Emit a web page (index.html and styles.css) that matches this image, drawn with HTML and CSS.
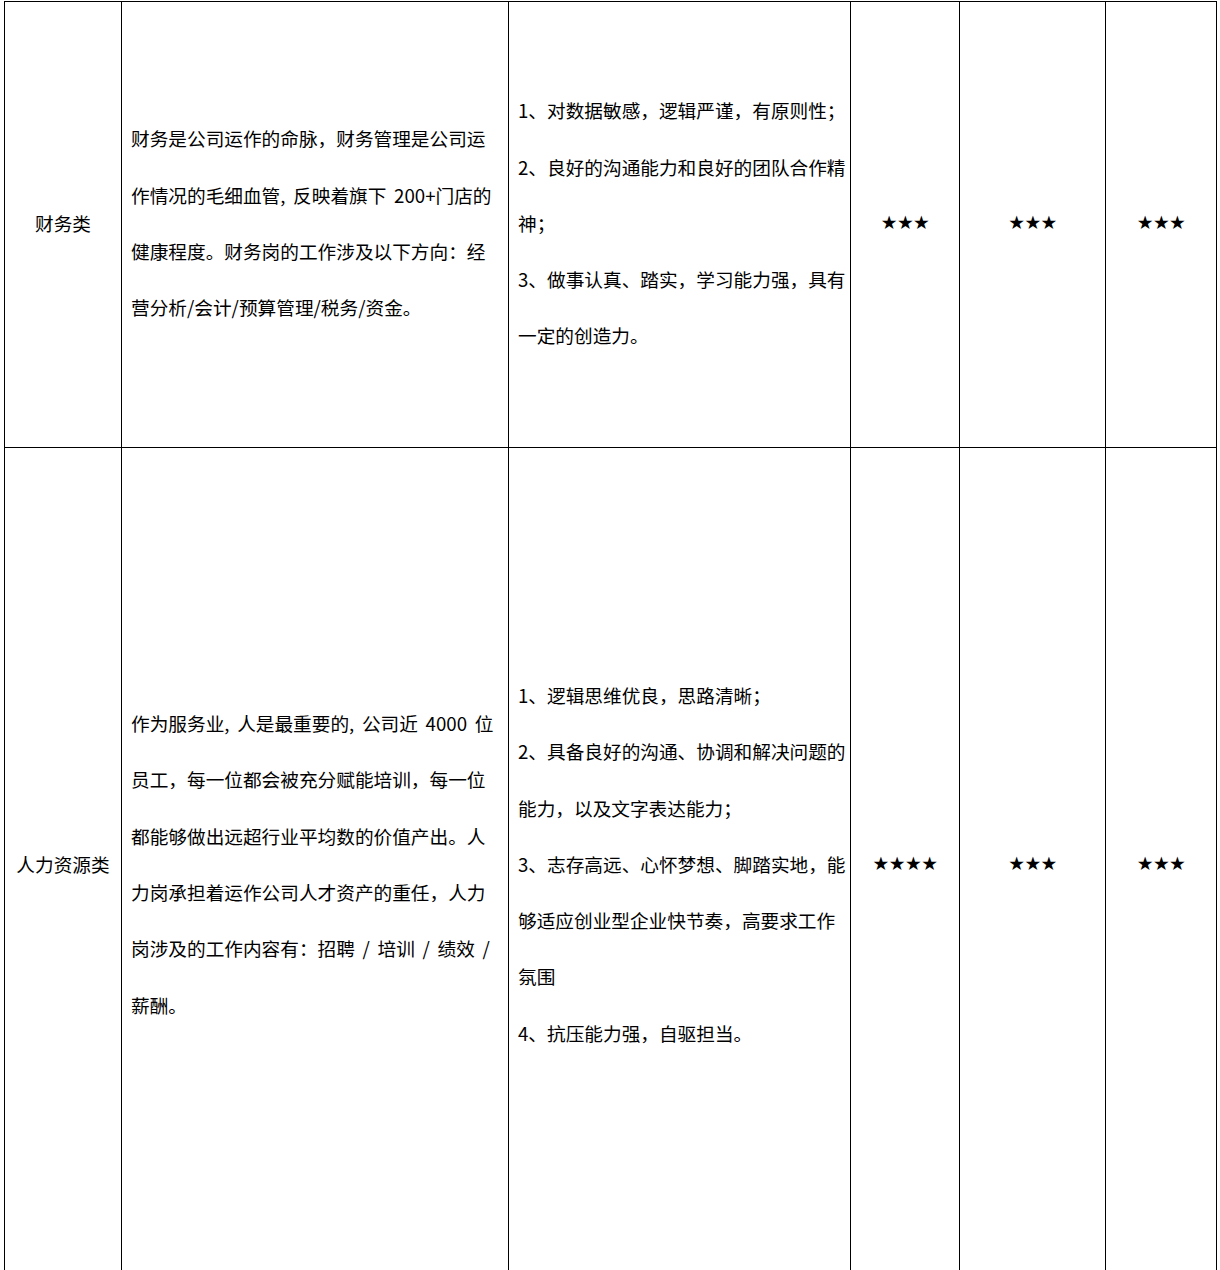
FILE: index.html
```html
<!DOCTYPE html>
<html lang="zh-CN">
<head>
<meta charset="utf-8">
<title>岗位介绍</title>
<link rel="stylesheet" href="styles.css">
</head>
<body>
<table class="jobs">
  <colgroup>
    <col class="c-cat">
    <col class="c-desc">
    <col class="c-req">
    <col class="c-s1">
    <col class="c-s2">
    <col class="c-s3">
  </colgroup>
  <tbody>
    <tr class="row-fin">
      <td class="cat">财务类</td>
      <td class="txt">财务是公司运作的命脉，财务管理是公司运<br>作情况的毛细血管, 反映着旗下 200+门店的<br>健康程度。财务岗的工作涉及以下方向：经<br>营分析/会计/预算管理/税务/资金。</td>
      <td class="txt">1、对数据敏感，逻辑严谨，有原则性；<br>2、良好的沟通能力和良好的团队合作精<br>神；<br>3、做事认真、踏实，学习能力强，具有<br>一定的创造力。</td>
      <td class="star">★★★</td>
      <td class="star">★★★</td>
      <td class="star">★★★</td>
    </tr>
    <tr class="row-hr">
      <td class="cat">人力资源类</td>
      <td class="txt">作为服务业, 人是最重要的, 公司近 4000 位<br>员工，每一位都会被充分赋能培训，每一位<br>都能够做出远超行业平均数的价值产出。人<br>力岗承担着运作公司人才资产的重任，人力<br>岗涉及的工作内容有：招聘 / 培训 / 绩效 /<br>薪酬。</td>
      <td class="txt">1、逻辑思维优良，思路清晰；<br>2、具备良好的沟通、协调和解决问题的<br>能力，以及文字表达能力；<br>3、志存高远、心怀梦想、脚踏实地，能<br>够适应创业型企业快节奏，高要求工作<br>氛围<br>4、抗压能力强，自驱担当。</td>
      <td class="star">★★★★</td>
      <td class="star">★★★</td>
      <td class="star">★★★</td>
    </tr>
  </tbody>
</table>
</body>
</html>
```

FILE: styles.css
```css
html, body {
  margin: 0;
  padding: 0;
  background: #ffffff;
}

body {
  font-family: "Noto Sans CJK SC", "Noto Sans", sans-serif;
  color: #000000;
}

.jobs {
  border-collapse: collapse;
  table-layout: fixed;
  width: 1213px;
  margin: 1px 0 0 4px;
  font-size: 18.67px;
}

.c-cat { width: 117px; }
.c-desc { width: 387px; }
.c-req { width: 342px; }
.c-s1 { width: 109px; }
.c-s2 { width: 146px; }
.c-s3 { width: 111px; }

.jobs td {
  border: 1px solid #000000;
  vertical-align: middle;
  padding: 0 8px 3px;
}

.row-fin { height: 446px; }
.row-hr { height: 836px; }

.jobs .cat {
  text-align: center;
  line-height: 28px;
  white-space: nowrap;
  padding: 0 0 3px;
}

.jobs .txt {
  line-height: 56.3px;
  white-space: nowrap;
  word-spacing: 3.5px;
  padding-left: 9px;
}

.star {
  text-align: center;
  font-family: "DejaVu Sans", sans-serif;
  font-size: 18.67px;
  line-height: 28px;
  letter-spacing: -0.5px;
}
```
